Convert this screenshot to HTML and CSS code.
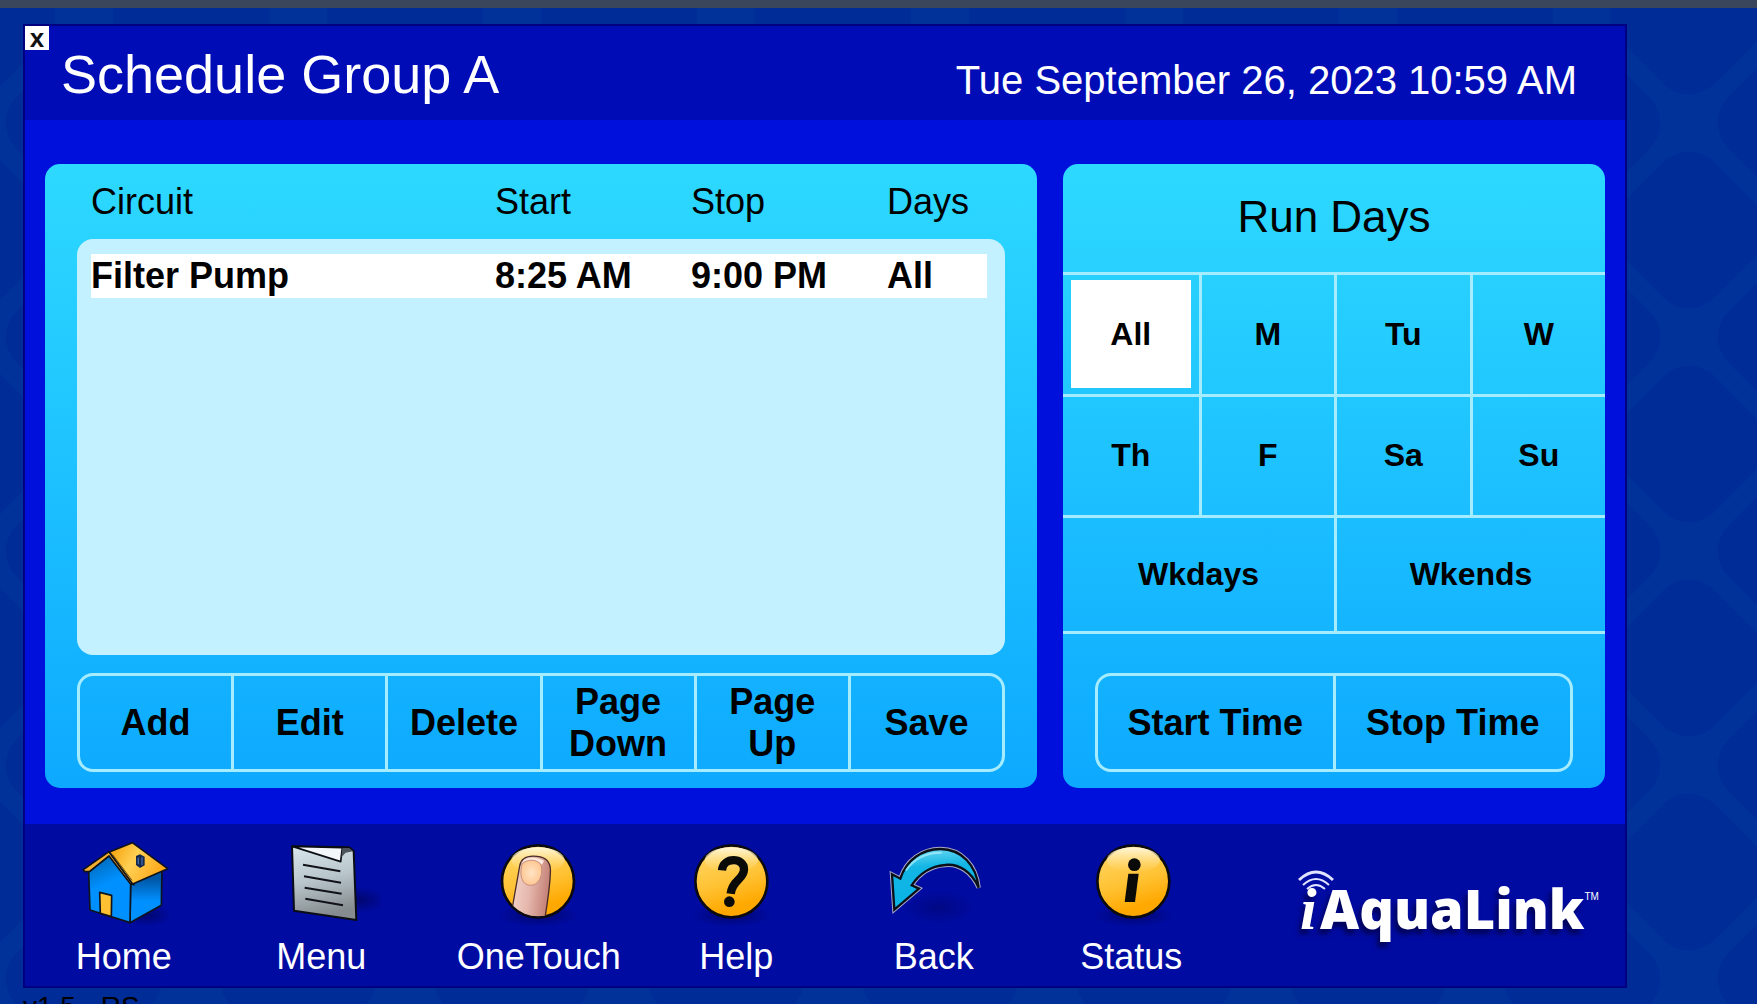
FILE: index.html
```html
<!doctype html>
<html lang="en">
  <head>
    <meta charset="UTF-8" />
    <meta name="viewport" content="width=device-width, initial-scale=1.0" />
    <title>iAquaLink</title>
    <link rel="stylesheet" href="styles.css">
  </head>
  <body>
    <div class="top-strip"></div>

    <div class="device">
      <header class="device-header">
        <button class="close-btn" aria-label="Close">x</button>
        <h1>Schedule Group A</h1>
        <time class="clock" datetime="2023-09-26T10:59">Tue September 26, 2023 10:59 AM</time>
      </header>

      <main class="device-main">
        <section class="panel">
          <table class="schedule">
            <thead>
              <tr>
                <th>Circuit</th>
                <th>Start</th>
                <th>Stop</th>
                <th>Days</th>
              </tr>
            </thead>
            <tbody>
              <tr class="selected">
                <td>Filter Pump</td>
                <td>8:25 AM</td>
                <td>9:00 PM</td>
                <td>All</td>
              </tr>
            </tbody>
          </table>
          <div class="button-bar">
            <button>Add</button>
            <button>Edit</button>
            <button>Delete</button>
            <button>Page<br>Down</button>
            <button>Page<br>Up</button>
            <button>Save</button>
          </div>
        </section>

        <section class="panel">
          <h2>Run Days</h2>
          <div class="days">
            <button class="active">All</button>
            <button>M</button>
            <button>Tu</button>
            <button>W</button>
            <button>Th</button>
            <button>F</button>
            <button>Sa</button>
            <button>Su</button>
            <button class="wide">Wkdays</button>
            <button class="wide">Wkends</button>
          </div>
          <div class="button-bar">
            <button>Start Time</button>
            <button>Stop Time</button>
          </div>
        </section>
      </main>

      <footer class="device-footer">
        <nav class="nav-group">
          <a href="#home">
            <svg viewBox="42 60 360 270" aria-hidden="true">
              <defs>
                <linearGradient id="roof" x1="0" y1="0" x2="1" y2="0.4">
                  <stop offset="0" stop-color="#f59a00" />
                  <stop offset="0.5" stop-color="#ffd054" />
                  <stop offset="1" stop-color="#ffa91a" />
                </linearGradient>
                <linearGradient id="wall" x1="0" y1="0" x2="0" y2="1">
                  <stop offset="0.2" stop-color="#0058a8" />
                  <stop offset="0.6" stop-color="#0090ff" />
                </linearGradient>
                <linearGradient id="front" x1="0" y1="0" x2="0.3" y2="1">
                  <stop offset="0" stop-color="#0060a8" />
                  <stop offset="0.5" stop-color="#0090ff" />
                </linearGradient>
                <radialGradient id="shade">
                  <stop offset="0" stop-color="#000040" stop-opacity="0.5" />
                  <stop offset="1" stop-color="#000040" stop-opacity="0" />
                </radialGradient>
              </defs>
              <ellipse cx="292" cy="286" rx="74" ry="34" fill="url(#shade)" />
              <g stroke="#10131c" stroke-width="5" stroke-linejoin="round">
                <path d="M242 190 L336 145 L334 256 L240 308 Z" fill="url(#wall)" />
                <path d="M177 106 L116 156 L120 270 L240 308 L242 190 Z" fill="url(#front)" />
                <path d="M177 95 L100 149 L104 155 L118 155 L177 108 L240 190 L252 194 Z" fill="#f7b02e" />
                <path d="M178 96 L247 68 L353 146 L248 192 Z" fill="url(#roof)" />
                <path d="M149 217 L185 226 L184 290 L151 280 Z" fill="#ffc132" />
              </g>
              <path d="M258 108 L270 103 L284 110 V136 L270 144 L258 135 Z" fill="#16294c" />
              <path d="M265 113 V133 M276 112 V135" stroke="#3d6cb4" stroke-width="4" />
              <path d="M188 104 L246 181" stroke="#6d4a08" stroke-width="3" />
            </svg>
            <span>Home</span>
          </a>
          <a href="#menu">
            <svg viewBox="636 60 360 270" aria-hidden="true">
              <defs>
                <linearGradient id="paper" x1="0" y1="0" x2="0.2" y2="1">
                  <stop offset="0" stop-color="#d9e6ec" />
                  <stop offset="0.5" stop-color="#b9c6cc" />
                  <stop offset="1" stop-color="#858b8e" />
                </linearGradient>
              </defs>
              <ellipse cx="930" cy="240" rx="84" ry="40" fill="url(#shade)" />
              <path d="M729 79 L900 82 L914 93 L922 300 L735 272 Z" fill="url(#paper)" stroke="#0b0d14" stroke-width="6" stroke-linejoin="round" />
              <path d="M730 79 L880 83 L875 125 Z" fill="#f4f7f9" stroke="#0b0d14" stroke-width="5" stroke-linejoin="round" />
              <path d="M880 84 L877 112 L890 98 L912 94 L900 84 Z" fill="#4d555a" />
              <path d="M762 134 L874 154 M765 169 L876 188 M767 203 L878 221 M769 236 L882 256" stroke="#101218" stroke-width="6" />
            </svg>
            <span>Menu</span>
          </a>
        </nav>

        <nav class="nav-group">
          <a href="#onetouch">
            <svg viewBox="117 60 360 270" aria-hidden="true">
              <defs>
                <linearGradient id="gold" x1="0.35" y1="0" x2="0.65" y2="1">
                  <stop offset="0" stop-color="#ffd766" />
                  <stop offset="0.5" stop-color="#ffc233" />
                  <stop offset="0.85" stop-color="#ffa800" />
                </linearGradient>
                <linearGradient id="gloss" x1="0" y1="0" x2="0" y2="1">
                  <stop offset="0" stop-color="#fff6d8" />
                  <stop offset="1" stop-color="#ffe08a" stop-opacity="0" />
                </linearGradient>
                <linearGradient id="skin" x1="0" y1="0.4" x2="1" y2="0.6">
                  <stop offset="0" stop-color="#f2d3c9" />
                  <stop offset="0.45" stop-color="#e6b8ae" />
                  <stop offset="1" stop-color="#c07a70" />
                </linearGradient>
                <radialGradient id="nail">
                  <stop offset="0" stop-color="#ffe3c4" />
                  <stop offset="1" stop-color="#ffc894" />
                </radialGradient>
                <clipPath id="disc"><circle cx="294" cy="184" r="105" /></clipPath>
              </defs>
              <ellipse cx="294" cy="286" rx="124" ry="36" fill="url(#shade)" />
              <circle cx="294" cy="184" r="108" fill="url(#gold)" stroke="#0a0a10" stroke-width="8" />
              <ellipse cx="294" cy="120" rx="80" ry="38" fill="url(#gloss)" />
              <g clip-path="url(#disc)">
                <path d="M216 270 C224 220 232 180 239 138 C244 108 268 106 292 109 C320 112 334 128 331 160 C330 200 322 250 314 300 L216 300 Z" fill="url(#skin)" stroke="#4a2c28" stroke-width="4" />
                <path d="M250 122 C262 110 292 110 312 122 L306 134 C288 118 266 118 246 130 Z" fill="#fbe9e0" />
                <path d="M246 132 C260 116 296 116 304 138 C310 170 294 197 270 196 C244 194 238 164 246 132 Z" fill="url(#nail)" stroke="#c78f7c" stroke-width="3" />
              </g>
            </svg>
            <span>OneTouch</span>
          </a>
          <a href="#help">
            <svg viewBox="711 60 360 270" aria-hidden="true">
              <ellipse cx="877" cy="286" rx="124" ry="36" fill="url(#shade)" />
              <circle cx="877" cy="184" r="108" fill="url(#gold)" stroke="#0a0a10" stroke-width="8" />
              <ellipse cx="877" cy="120" rx="80" ry="38" fill="url(#gloss)" />
              <path d="M849 151 C852 110 916 112 915 148 C914 180 880 178 875 221" fill="none" stroke="#0a0a08" stroke-width="25" />
              <circle cx="871" cy="245" r="16" fill="#0a0a08" />
            </svg>
            <span>Help</span>
          </a>
          <a href="#back">
            <svg viewBox="45 60 360 270" aria-hidden="true">
              <defs>
                <linearGradient id="arrow" x1="0.3" y1="0" x2="0.4" y2="1">
                  <stop offset="0" stop-color="#6ad8f2" />
                  <stop offset="0.3" stop-color="#12b5e4" />
                  <stop offset="1" stop-color="#08b4e8" />
                </linearGradient>
              </defs>
              <ellipse cx="240" cy="262" rx="112" ry="52" fill="url(#shade)" opacity="0.6" />
              <path d="M99 163 L124 176 C142 118 190 88 244 87 C308 87 352 136 359 203 C338 156 300 130 258 135 C216 138 180 162 158 196 L180 206 L106 269 Z" fill="none" stroke="#a9a9c8" stroke-width="13" />
              <path d="M99 163 L124 176 C142 118 190 88 244 87 C308 87 352 136 359 203 C338 156 300 130 258 135 C216 138 180 162 158 196 L180 206 L106 269 Z" fill="url(#arrow)" stroke="#0a0f18" stroke-width="7" />
              <path d="M142 150 C168 112 206 98 246 98" fill="none" stroke="#b2effc" stroke-width="6" stroke-linecap="round" opacity="0.7" />
            </svg>
            <span>Back</span>
          </a>
          <a href="#status">
            <svg viewBox="639 60 360 270" aria-hidden="true">
              <ellipse cx="826" cy="286" rx="124" ry="36" fill="url(#shade)" />
              <circle cx="826" cy="184" r="108" fill="url(#gold)" stroke="#0a0a10" stroke-width="8" />
              <ellipse cx="826" cy="120" rx="80" ry="38" fill="url(#gloss)" />
              <circle cx="829" cy="134" r="19" fill="#0a0a08" />
              <path d="M811 161 H842 L831 246 H800 Z" fill="#0a0a08" />
            </svg>
            <span>Status</span>
          </a>
        </nav>

        <div class="logo">
          <svg class="logo-waves" viewBox="0 0 36 21" aria-hidden="true">
            <path d="M1 10 Q18 -6 35 10" stroke-width="3" />
            <path d="M5 15 Q18 3 31 15" stroke-width="2" />
            <path d="M9 19 Q18 11 27 19" stroke-width="2" />
          </svg>
          <span class="logo-i">i</span><span class="logo-name">AquaLink</span><span class="logo-tm">TM</span>
        </div>
      </footer>
    </div>

    <p class="version">v1.5 - RS</p>
  </body>
</html>
```

FILE: styles.css
```css
* {
  box-sizing: border-box;
}

body {
  font-family: "Liberation Sans", Arial, sans-serif;
  margin: 0;
  min-height: 100vh;
  overflow: hidden;
  color: #000;
  background-color: #00329a;
  background-image: url("data:image/svg+xml,%3Csvg xmlns='http://www.w3.org/2000/svg' width='214' height='214'%3E%3Cg fill='%23002c97'%3E%3Crect x='-66' y='-66' width='132' height='132' rx='36' transform='translate(107 0) rotate(45)'/%3E%3Crect x='-66' y='-66' width='132' height='132' rx='36' transform='translate(107 214) rotate(45)'/%3E%3Crect x='-66' y='-66' width='132' height='132' rx='36' transform='translate(0 107) rotate(45)'/%3E%3Crect x='-66' y='-66' width='132' height='132' rx='36' transform='translate(214 107) rotate(45)'/%3E%3C/g%3E%3C/svg%3E");
  background-position: 84px 16px;
}

h1,
h2,
p {
  margin: 0;
  font-weight: normal;
}

button {
  font: inherit;
  color: inherit;
  border: 0;
  padding: 0;
  background: none;
  cursor: pointer;
}

.top-strip {
  height: 8px;
  background: #39465c;
}

.device {
  margin: 16px 130px 0 23px;
  border: 2px solid #000080;
  background: #0010dc;
}

.device-header {
  position: relative;
  display: flex;
  justify-content: space-between;
  align-items: flex-start;
  height: 94px;
  padding: 18px 48px 0 36px;
  color: #fff;
  background: #000cb6;
}

.device-header h1 {
  font-size: 54px;
  line-height: 60px;
}

.clock {
  padding-top: 12px;
  font-size: 40px;
  line-height: 48px;
}

.close-btn {
  position: absolute;
  top: 0;
  left: 0;
  width: 24px;
  height: 24px;
  font-size: 26px;
  font-weight: bold;
  line-height: 20px;
  color: #111;
  background: #fff;
}

.device-main {
  display: grid;
  grid-template-columns: 992fr 542fr;
  gap: 26px;
  padding: 44px 20px 36px;
}

.panel {
  display: flex;
  flex-direction: column;
  min-height: 624px;
  padding-bottom: 16px;
  border-radius: 15px;
  background: linear-gradient(#2dd9ff, #0da9ff);
}

/* schedule list */
.schedule {
  display: flex;
  flex: 1;
  flex-direction: column;
  margin: 0 32px 18px;
  font-size: 36px;
  line-height: 44px;
}

.schedule thead {
  display: block;
  padding: 16px 18px 15px 14px;
}

.schedule tbody {
  display: block;
  flex: 1;
  padding: 15px 18px 15px 14px;
  border-radius: 16px;
  background: #c3f1ff;
}

.schedule tr {
  display: grid;
  grid-template-columns: 404fr 196fr 196fr 100fr;
}

.schedule th,
.schedule td {
  padding: 0;
  text-align: left;
  font-weight: normal;
}

.schedule .selected {
  background: #fff;
}

.schedule .selected td {
  font-weight: bold;
}

.button-bar {
  display: flex;
  height: 99px;
  margin: auto 32px 0;
  border: 3px solid #a6ecff;
  border-radius: 16px;
  font-size: 36px;
  font-weight: bold;
  line-height: 42px;
}

.button-bar button {
  flex: 1;
}

.button-bar button + button {
  border-left: 3px solid #a6ecff;
}

/* run days */
.panel h2 {
  height: 108px;
  padding-top: 26px;
  font-size: 44px;
  line-height: 54px;
  text-align: center;
}

.days {
  display: grid;
  grid-template-columns: repeat(4, 1fr);
  grid-template-rows: 122px 121px 116px;
  border-bottom: 3px solid #a6ecff;
  font-size: 32px;
  font-weight: bold;
}

.days button {
  border-top: 3px solid #a6ecff;
  border-left: 3px solid #a6ecff;
  padding: 5px 8px 6px;
}

.days button:nth-child(4n + 1) {
  border-left: 0;
}

.days .wide {
  grid-column: span 2;
}

.days .active {
  background: #fff content-box;
}

/* bottom navigation */
.device-footer {
  display: grid;
  grid-template-columns: 396fr 792fr 376fr;
  gap: 20px;
  height: 162px;
  background: #000ba2;
}

.nav-group {
  display: flex;
}

.nav-group a {
  display: flex;
  flex: 1;
  flex-direction: column;
  align-items: center;
  gap: 6px;
  padding-top: 16px;
  color: #fff;
  font-size: 36px;
  line-height: 42px;
  text-decoration: none;
}

.nav-group svg {
  width: 120px;
  height: 90px;
}

.logo {
  position: relative;
  display: flex;
  align-items: baseline;
  padding: 49px 0 0 50px;
  color: #fff;
  text-shadow: -3px 5px 5px rgba(0, 0, 60, 0.7);
}

.logo-waves {
  position: absolute;
  top: 46px;
  left: 48px;
  width: 36px;
  height: 21px;
  fill: none;
  stroke: #dfe3ff;
}

.logo-i {
  width: 20px;
  font: italic bold 60px/70px "Liberation Serif", serif;
}

.logo-name {
  font: 800 54px/70px "Open Sans", sans-serif;
}

.logo-tm {
  align-self: flex-start;
  padding-top: 16px;
  font-size: 10px;
  line-height: 16px;
  text-shadow: none;
}

.version {
  padding: 3px 23px;
  font-size: 28px;
  line-height: 32px;
}
```
